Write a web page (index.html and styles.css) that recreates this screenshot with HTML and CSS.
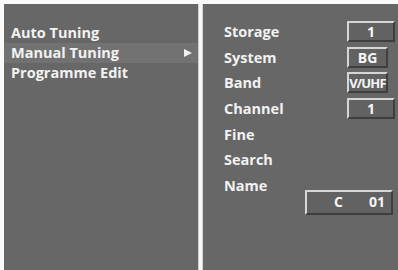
FILE: index.html
```html
<!DOCTYPE html>
<html>
<head>
  <meta charset="UTF-8">
  <title>Manual Tuning</title>
  <link rel="stylesheet" href="styles.css">
</head>
<body>
  <div class="screen">
    <!-- main menu -->
    <div class="menu">
      <div class="menu-item">Auto Tuning</div>
      <div class="menu-item active">Manual Tuning <span class="arrow"></span></div>
      <div class="menu-item">Programme Edit</div>
    </div>

    <div class="divider"></div>

    <!-- sub menu -->
    <div class="submenu">
      <div class="row"><span class="label">Storage</span><span class="box wide">1</span></div>
      <div class="row"><span class="label">System</span><span class="box narrow">BG</span></div>
      <div class="row"><span class="label">Band</span><span class="box narrow tight">V/UHF</span></div>
      <div class="row"><span class="label">Channel</span><span class="box wide">1</span></div>
      <div class="row"><span class="label">Fine</span></div>
      <div class="row"><span class="label">Search</span></div>
      <div class="row name-row">
        <span class="label">Name</span>
        <span class="box name-box"><span>C</span><span>01</span></span>
      </div>
    </div>
  </div>
</body>
</html>
```

FILE: styles.css
```css
* {
  box-sizing: border-box;
  margin: 0;
  padding: 0;
}

html, body {
  width: 100%;
  height: 100%;
}

body {
  background: #fafafa;
  font-family: "Open Sans", "DejaVu Sans", sans-serif;
  font-weight: bold;
  color: #f2f2f2;
  padding: 4px 0 0 4px;
}

.screen {
  display: flex;
  height: 100%;
  background: #676767;
}

/* 左側主選單 */
.menu {
  width: 194px;
  padding-top: 19px;
}

.menu-item {
  display: flex;
  align-items: center;
  justify-content: space-between;
  height: 20px;
  line-height: 20px;
  font-size: 14.5px;
  padding: 0 7px 0 7px;
}

.menu-item.active {
  background: #727272;
}

.arrow {
  width: 0;
  height: 0;
  border-top: 4px solid transparent;
  border-bottom: 4px solid transparent;
  border-left: 8px solid #f2f2f2;
  margin-right: -1px;
}

.divider {
  width: 5px;
  background: linear-gradient(to right, #bdbdbd, #f6f6f6 30%, #f6f6f6 70%, #c4c4c4);
}

/* 右側設定 */
.submenu {
  flex: 1;
  padding: 14.7px 3px 0 21px;
}

.row {
  display: flex;
  align-items: center;
  justify-content: space-between;
  height: 25.7px;
  font-size: 14.5px;
}

.box {
  display: flex;
  align-items: center;
  justify-content: center;
  height: 21px;
  background: #626262;
  border-top: 2px solid #d6d6d6;
  border-left: 2px solid #d6d6d6;
  border-bottom: 2px solid #3e3e3e;
  border-right: 2px solid #3e3e3e;
  font-size: 14px;
  color: #f6f6f6;
}

.box.wide {
  width: 48px;
}

.box.narrow {
  width: 41px;
  margin-right: 7px;
}

.box.tight {
  letter-spacing: -0.8px;
  font-size: 13px;
}

.name-row {
  align-items: flex-start;
  height: auto;
  line-height: 25.7px;
}

.name-box {
  width: 88px;
  height: 25px;
  margin-top: 17px;
  margin-right: 2px;
  justify-content: flex-end;
  gap: 26px;
  padding-right: 6px;
}
```
